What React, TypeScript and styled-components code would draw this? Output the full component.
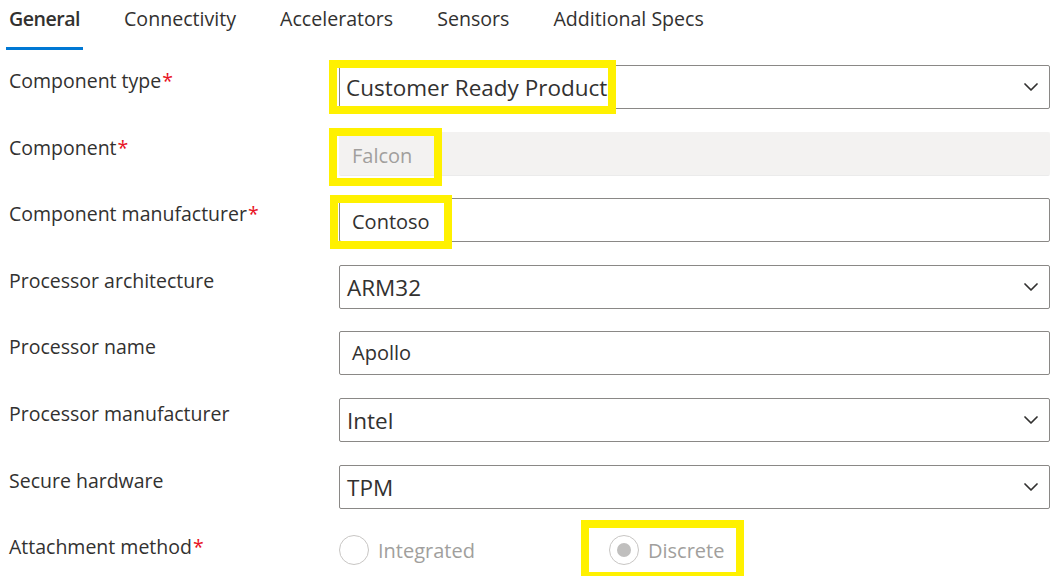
import React from "react";
import styled, { createGlobalStyle, css } from "styled-components";

const Global = createGlobalStyle`
  html, body { margin: 0; padding: 0; background: #ffffff; }
  body { font-family: "Open Sans", "Noto Sans", "Liberation Sans", sans-serif; color: #323130; }
  * { box-sizing: border-box; }
`;

const highlight = css`
  outline: 8px solid #fff100;
  outline-offset: 0;
`;

const Page = styled.div`
  width: 1063px;
  height: 576px;
  overflow: hidden;
  padding: 0 13px 0 6px;
`;

const Tabs = styled.nav`
  display: flex;
  gap: 38px;
  height: 50px;
`;

const Tab = styled.div<{ $active?: boolean }>`
  height: 50px;
  padding: 4px 3px 0;
  font-size: 19.6px;
  line-height: 30px;
  font-weight: ${(p) => (p.$active ? 600 : 400)};
  letter-spacing: ${(p) => (p.$active ? "-0.5px" : "0")};
  color: #323130;
  border-bottom: 3px solid ${(p) => (p.$active ? "#0078d4" : "transparent")};
  white-space: nowrap;
`;

const Form = styled.div`
  margin-top: 15px;
  padding-left: 3px;
  display: grid;
  grid-template-columns: 330px 1fr;
  row-gap: 22.6px;
  align-items: start;
`;

const Label = styled.div`
  font-size: 19.5px;
  line-height: 28px;
  padding-top: 2px;
  color: #323130;
  white-space: nowrap;
`;

const Req = styled.span`
  color: #e81123;
  margin-left: 1px;
`;

const FieldBase = styled.div`
  height: 44px;
  border: 1px solid #8a8886;
  border-radius: 2px;
  display: flex;
  align-items: center;
  background: #fff;
`;

const Select = styled(FieldBase)`
  padding: 0 11px 0 7px;
  justify-content: space-between;
  font-size: 22.5px;
  color: #323130;
`;

const SelectValue = styled.span<{ $hl?: boolean }>`
  line-height: 36px;
  padding-top: 2px;
  white-space: nowrap;
  ${(p) =>
    p.$hl &&
    css`
      margin-left: -10px;
      padding: 2px 1px 0 9px;
      ${highlight}
    `}
`;

const TextInput = styled(FieldBase)`
  padding: 0 12px;
  font-size: 20px;
  color: #323130;
`;

const InputValue = styled.span<{ $hl?: boolean }>`
  line-height: 38px;
  white-space: nowrap;
  ${(p) =>
    p.$hl &&
    css`
      align-self: flex-start;
      margin: 4px 0 0 -14px;
      padding: 0 14px;
      height: 38px;
      ${highlight}
    `}
`;

const DisabledInput = styled.div`
  height: 44px;
  border: 1px solid #f3f2f1;
  border-bottom-color: #ebebeb;
  border-radius: 2px;
  background: #f3f2f1;
  display: flex;
  align-items: flex-start;
  padding: 0 12px;
  font-size: 20px;
  color: #a19f9d;
`;

const DisabledValue = styled.span<{ $hl?: boolean }>`
  line-height: 40px;
  white-space: nowrap;
  ${(p) =>
    p.$hl &&
    css`
      margin: 3px 0 0 -15px;
      padding: 0 22px 0 15px;
      height: 42px;
      ${highlight}
    `}
`;

const RadioGroup = styled.div`
  display: grid;
  grid-template-columns: 270px auto;
  justify-content: start;
  height: 34px;
  align-items: center;
  margin-top: 2px;
`;

const RadioOption = styled.label<{ $hl?: boolean }>`
  display: flex;
  align-items: center;
  gap: 9px;
  font-size: 20px;
  color: #a19f9d;
  white-space: nowrap;
  ${(p) =>
    p.$hl &&
    css`
      margin: -5px 0 -5px -20px;
      padding: 5px 12px 5px 20px;
      height: 44px;
      ${highlight}
    `}
`;

const Circle = styled.span<{ $checked?: boolean }>`
  width: 30px;
  height: 30px;
  border-radius: 50%;
  border: 1px solid #c8c6c4;
  display: flex;
  align-items: center;
  justify-content: center;
  flex: none;
  &::after {
    content: "";
    display: ${(p) => (p.$checked ? "block" : "none")};
    width: 14px;
    height: 14px;
    border-radius: 50%;
    background: #c0bfbe;
  }
`;

const Chevron = () => (
  <svg width="14" height="8" viewBox="0 0 14 8" fill="none">
    <path d="M1 1 L7 7 L13 1" stroke="#323130" strokeWidth="1.7" strokeLinecap="round" strokeLinejoin="round" />
  </svg>
);

const tabs = ["General", "Connectivity", "Accelerators", "Sensors", "Additional Specs"];

export default function App() {
  return (
    <Page>
      <Global />
      <Tabs>
        {tabs.map((t, i) => (
          <Tab key={t} $active={i === 0}>
            {t}
          </Tab>
        ))}
      </Tabs>
      <Form>
        <Label>
          Component type<Req>*</Req>
        </Label>
        <Select>
          <SelectValue $hl>Customer Ready Product</SelectValue>
          <Chevron />
        </Select>

        <Label>
          Component<Req>*</Req>
        </Label>
        <DisabledInput>
          <DisabledValue $hl>Falcon</DisabledValue>
        </DisabledInput>

        <Label>
          Component manufacturer<Req>*</Req>
        </Label>
        <TextInput>
          <InputValue $hl>Contoso</InputValue>
        </TextInput>

        <Label>Processor architecture</Label>
        <Select>
          <SelectValue>ARM32</SelectValue>
          <Chevron />
        </Select>

        <Label>Processor name</Label>
        <TextInput>
          <InputValue>Apollo</InputValue>
        </TextInput>

        <Label>Processor manufacturer</Label>
        <Select>
          <SelectValue>Intel</SelectValue>
          <Chevron />
        </Select>

        <Label>Secure hardware</Label>
        <Select>
          <SelectValue>TPM</SelectValue>
          <Chevron />
        </Select>

        <Label>
          Attachment method<Req>*</Req>
        </Label>
        <RadioGroup>
          <RadioOption>
            <Circle />
            Integrated
          </RadioOption>
          <RadioOption $hl>
            <Circle $checked />
            Discrete
          </RadioOption>
        </RadioGroup>
      </Form>
    </Page>
  );
}
